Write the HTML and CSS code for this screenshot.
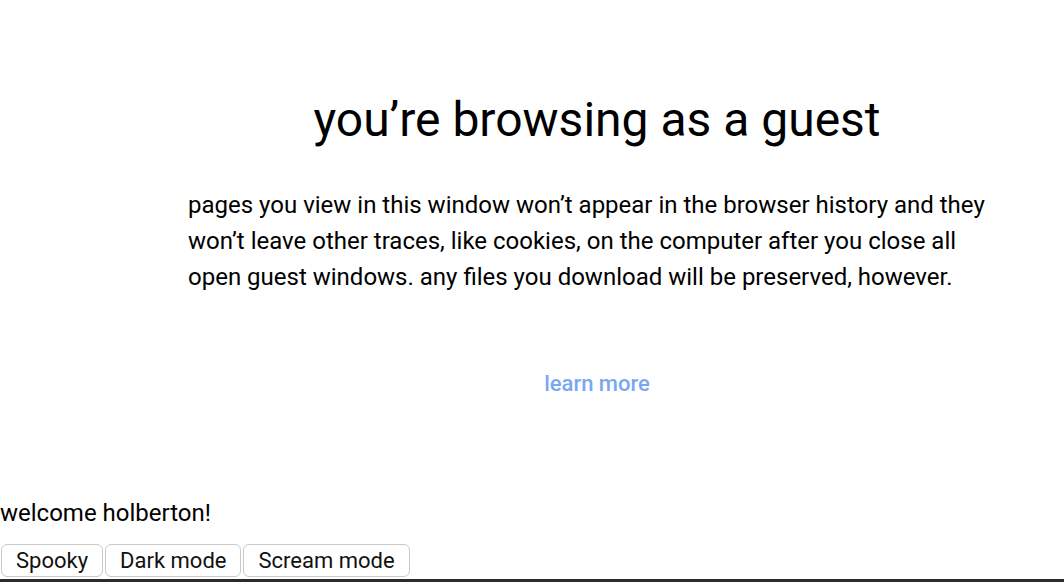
FILE: index.html
```html
<!DOCTYPE html>
<html lang="en">
<head>
<meta charset="utf-8">
<title>Guest</title>
<link rel="stylesheet" href="styles.css">
</head>
<body>
<main class="guest">
  <h1 class="guest-title">you’re browsing as a guest</h1>
  <p class="guest-text">pages you view in this window won’t appear in the browser history and they won’t leave other traces, like cookies, on the computer after you close all open guest windows. any files you download will be preserved, however.</p>
  <a class="guest-link" href="#">learn more</a>
</main>
<section class="welcome">
  <p class="welcome-text">welcome holberton!</p>
  <div class="modes">
    <button class="mode-btn">Spooky</button>
    <button class="mode-btn">Dark mode</button>
    <button class="mode-btn">Scream mode</button>
  </div>
</section>
<div class="footer-bar"></div>
</body>
</html>
```
FILE: styles.css
```css
html, body {
  margin: 0;
  padding: 0;
  background: #ffffff;
}
body {
  font-family: Roboto, "Liberation Sans", sans-serif;
  color: #000;
  height: 582px;
  display: flex;
  flex-direction: column;
  overflow: hidden;
}
.guest {
  margin-left: 130px;
  display: flex;
  flex-direction: column;
  align-items: center;
  padding-top: 90px;
}
.guest-title {
  font-size: 48px;
  font-weight: 400;
  margin: 0;
  line-height: 60px;
}
.guest-text {
  font-size: 24px;
  line-height: 36px;
  margin: 37px 0 0 0;
  padding: 0 58px;
  width: 818px;
  box-sizing: content-box;
}
.guest-link {
  margin-top: 76px;
  font-size: 22px;
  font-weight: 500;
  color: #7aa7f4;
  text-decoration: none;
  line-height: 26px;
}
.welcome {
  margin-top: 102px;
}
.welcome-text {
  margin: 0;
  font-size: 24px;
  line-height: 28px;
}
.modes {
  display: flex;
  gap: 2px;
  margin-top: 17px;
  padding-left: 1px;
}
.mode-btn {
  font-family: Roboto, "Liberation Sans", sans-serif;
  font-size: 22px;
  background: #fff;
  color: #111;
  border: 1px solid #c9c9c9;
  border-radius: 6px;
  padding: 0 14px;
  height: 33px;
  line-height: 31px;
}
.footer-bar {
  position: absolute;
  left: 0;
  right: 0;
  top: 579px;
  height: 3px;
  background: #2b2b2b;
}
```
